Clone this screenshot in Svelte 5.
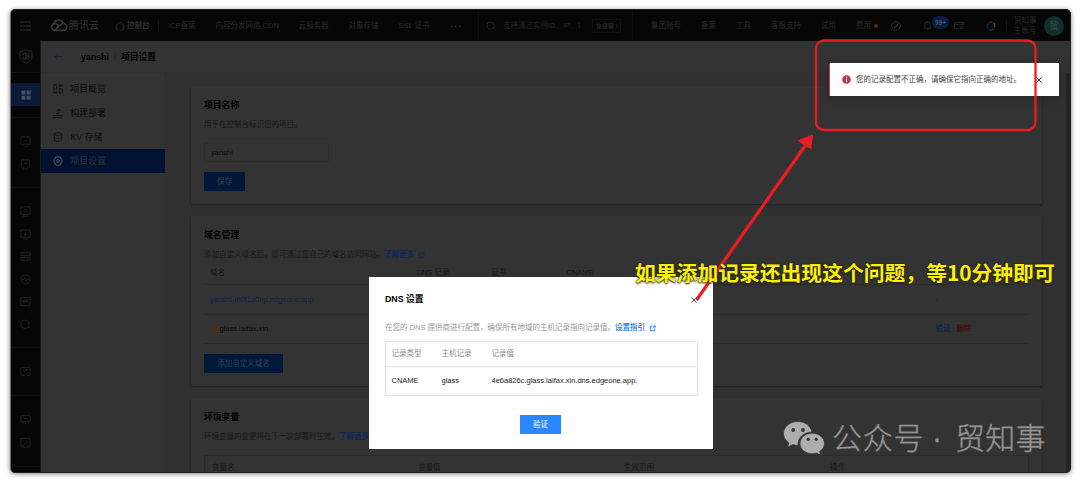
<script>
  const left = [
    ['ICP备案', 47.5], ['内容分发网络 CDN', 83], ['云服务器', 50], ['对象存储', 50], ['SSL 证书', 52]
  ];
  const right = [['集团账号', 50], ['备案', 35], ['工具', 35], ['客服支持', 50], ['试用', 35], ['费用', 18]];
  const groups = [
    { h: 70, icons: ['monitor', 'shield'] },
    { h: 160, icons: ['screen', 'down', 'server', 'pulse', 'doc', 'search'] },
    { h: 48, icons: ['mail'] },
    { h: 71, icons: ['chip', 'image'] },
    { h: 6, icons: [] }
  ];
  const paths = {
    monitor: 'M1 1h10v8H1zM3 11h6M4 6l1.5-1.5 1 1L8 4',
    shield: 'M1.5 1h9v5.5C10.5 9 8 10.5 6 11.2 4 10.5 1.5 9 1.5 6.5zM4 6l1.5-1.5 1 1L8 4',
    screen: 'M1 1h10v8H1zM3 11h6M4 5a2 2 0 0 1 3.5-1M8 5a2 2 0 0 1-3.5 1',
    down: 'M1 1h10v8H1zM3 11h6M6 3v4M4 5.3l2 2 2-2',
    server: 'M1 1.5h10v3.5H1zM1 7h10v3.5H1zM3 3.2h2M7 3.2h2M3 8.8h2M7 8.8h2',
    pulse: 'M11 6A5 5 0 1 1 1 6a5 5 0 0 1 10 0zM2.5 6h1.5l1-2.5 2 5L8 6h1.5',
    doc: 'M1 1.5h10v9H1zM3 4.5h6M3 6h6M3 7.5h3',
    search: 'M10 5.7A4.4 4.4 0 1 1 1.2 5.7a4.4 4.4 0 0 1 8.8 0zM8.5 9.3h2.5',
    mail: 'M6 10H1V1.5h10V6M3 4l2 1.5L9 3M11 8.8a1.8 1.8 0 1 1-3.6 0 1.8 1.8 0 0 1 3.6 0z',
    chip: 'M1 1.5h10v7H1zM4 5h4M3 9v2M6 9v2M9 9v2',
    image: 'M1 1.5h10v9.5H1zM2 10.5l4-4M6.5 3.5l3 3M6 6.5l4.5 4'
  };
</script>

{#snippet ext()}
  <svg class="ext" viewBox="0 0 8 8"><path d="M4 1.5H1.5v5h5V4M4 4.2 7 1.2M5 1h2v2" /></svg>
{/snippet}

<div class="stage">
  <div class="window">
    <header>
      <svg class="burger" viewBox="0 0 11 10"><path d="M0 1h11M0 5h11M0 9h11" /></svg>
      <svg class="cloud" viewBox="0 0 18 13"><path d="M4.6 11.3h8.7a3.4 3.4 0 0 0 0-6.8c-1.4 0-2.4.8-3.4 1.8l-5.1 4.9M4.9 11.3a3.4 3.4 0 1 1 2.4-5.8l1 .9M4.1 4.8a4.8 4.8 0 0 1 9.2-.3" /></svg>
      <span class="brand">腾讯云</span>
      <svg class="house" viewBox="0 0 10 10"><path d="M.5 5 5 1l4.500 4M1.8 4v5.200h1.700M8.200 4v5.200H6.500" /></svg>
      <b class="console">控制台</b>
      <i class="bar"></i>
      <nav class="links">
        {#each left as [t, w]}<span style="width:{w}px">{t}</span>{/each}
      </nav>
      <span class="dots">•••</span>
      <div class="find">
        <svg viewBox="0 0 10 10"><circle cx="4.5" cy="4.5" r="3.6" /><path d="m7.2 7.2 2 2" /></svg>
        <span class="ph">支持通过实例ID、IP、名称</span>
        <kbd>快捷键 /</kbd>
      </div>
      <nav class="links tools">
        {#each right as [t, w]}<span style="width:{w}px">{t}</span>{/each}
      </nav>
      <i class="due"></i>
      <svg class="compass" viewBox="0 0 10 10"><circle cx="5" cy="5" r="4.4" /><path d="M3.5 7.5V5.5L6.500 4v-1.500M3.500 5.500 5 6.500 6.500 4" /></svg>
      <div class="bell">
        <svg viewBox="0 0 10 11"><path d="M.7 8.5h8.6M2 8.5V4.600a3 3 0 0 1 6 0v3.900M4 10.200h2M5 .5v1" /></svg>
        <span class="badge">99+</span>
      </div>
      <svg class="wallet" viewBox="0 0 11 9"><path d="M5.5 8H.7V1h9.600v3M.7 3.200h9.600" /><circle cx="8.400" cy="6.600" r="1.500" /></svg>
      <svg class="hex" viewBox="0 0 10 10"><path stroke="#542316" d="M2.5 2 5 .8 6.500 1.600" /><path stroke="#55421a" d="M7.800 2.200 8.700 3v3.600" /><path stroke="#19315d" d="M7.600 8 5 9.200 2.400 8" /><path stroke="#272052" d="M1.300 7V3.200L3 4" /></svg>
      <i class="bar last"></i>
      <div class="user">贸知事<br />主账号</div>
      <div class="avatar">贸</div>
    </header>

    <div class="body">
      <aside class="rail">
        <div class="product">
          <svg viewBox="0 0 14 15"><path d="M7 .8 13 3v4.700c0 3-2.800 5.200-6 6.600-3.200-1.400-6-3.600-6-6.600V3z" /><path d="M4 4h6v6H4zM4 4l6 3-6 3M7 4v6" /></svg>
        </div>
        <div class="current">
          <svg viewBox="0 0 10 10"><path d="M.5.5h4v4h-4zM5.700.5h4v4h-4zM.5 5.700h4v4h-4zM5.700 5.700h4v4h-4z" /></svg>
        </div>
        {#each groups as g}
          <div class="group" style="height:{g.h}px">
            {#each g.icons as name}<svg viewBox="0 0 12 12"><path d={paths[name]} /></svg>{/each}
          </div>
        {/each}
      </aside>

      <div class="work">
        <div class="crumbs">
          <svg viewBox="0 0 9 7"><path d="M8.500 3.500H1M3.700.8 1 3.500l2.700 2.700" /></svg>
          <b>yanshi</b><em>/</em><b>项目设置</b>
        </div>
        <div class="split">
          <nav class="menu">
            <div><svg viewBox="0 0 10 10"><path d="M.7.7h3v4.600h-3zM6.300 4.700h3v4.600h-3z" /><path class="fat" d="M.2 8.500h4M5.800 1.500h4" /></svg>项目概览</div>
            <div><svg viewBox="0 0 10 10"><path d="M0 9.500h10M0 7.500h10M3 5.500h2.800V1M3.500 3l2.300-2.200L8 3" /></svg>构建部署</div>
            <div><svg viewBox="0 0 10 10"><ellipse cx="5" cy="2" rx="3.700" ry="1.400" /><path d="M1.300 2v6c0 2 7.400 2 7.400 0V2M1.300 5c0 1.900 7.400 1.900 7.400 0" /></svg>KV 存储</div>
            <div class="on"><svg viewBox="0 0 10 10"><path d="M3 .9h4L9.300 5 7 9.100H3L.7 5z" /><circle cx="5" cy="5" r="1.300" /></svg>项目设置</div>
          </nav>
          <main>
            <section class="card c1">
              <h3>项目名称</h3>
              <p>用于在控制台标识您的项目。</p>
              <div class="input">yanshi</div>
              <div class="btn">保存</div>
            </section>
            <section class="card c2">
              <h3>域名管理</h3>
              <p>添加自定义域名后，即可通过您自己的域名访问网站。<b>了解更多</b>{@render ext()}</p>
              <div class="tr th"><span>域名</span><span>DNS 记录</span><span>证书</span><span>CNAME</span><span></span></div>
              <div class="tr r1"><span class="blue">yanshi-m0t1a0np.edgeone.app</span><span></span><span></span><span></span><span>-</span></div>
              <div class="tr r2"><span class="warn"><svg viewBox="0 0 9 9"><circle cx="4.500" cy="4.500" r="3.700" /><path d="M4.500 2.300v2.800M4.500 6v.8" /></svg>glass.laifax.xin</span><span></span><span></span><span></span><span><b class="blue">验证</b><b class="red">删除</b></span></div>
              <div class="btn wide">添加自定义域名</div>
            </section>
            <section class="card c3">
              <h3>环境变量</h3>
              <p>环境变量的变更将在下一次部署时生效。<b>了解更多</b></p>
              <div class="vars"><span>变量名</span><span>变量值</span><span>生效范围</span><span>操作</span></div>
            </section>
          </main>
          <div class="scroll"></div>
        </div>
      </div>
    </div>
  </div>

  <div class="modal">
    <div class="title"><b>DNS 设置</b><svg viewBox="0 0 6 6"><path d="m.5.5 5 5m0-5-5 5" /></svg></div>
    <p>在您的 DNS 提供商进行配置，确保所有地域的主机记录指向记录值。<b>设置指引</b>{@render ext()}</p>
    <div class="table">
      <div class="row head"><span>记录类型</span><span>主机记录</span><span>记录值</span></div>
      <div class="row"><span>CNAME</span><span>glass</span><span>4e6a826c.glass.laifax.xin.dns.edgeone.app.</span></div>
    </div>
    <div class="verify">验证</div>
  </div>

  <div class="toast">
    <svg class="err" viewBox="0 0 9 9"><circle cx="4.500" cy="4.500" r="4.300" /><path d="M4.500 1.800v1.200M4.500 3.800v3.400" /></svg>
    <span>您的记录配置不正确，请确保它指向正确的地址。</span>
    <svg class="x" viewBox="0 0 6 6"><path d="m.5.5 5 5m0-5-5 5" /></svg>
  </div>

  <svg class="marks" viewBox="0 0 1080 482">
    <rect x="816" y="40.500" width="219.500" height="89.500" rx="8" />
    <path d="M696.500 300 805 146" />
    <path class="tip" d="M813 134.500 811.300 149 806 146.500 797.500 140.500z" />
  </svg>
  <div class="note">如果添加记录还出现这个问题，等10分钟即可</div>

  <div class="sign">
    <svg viewBox="0 0 42 34">
      <path class="bub" d="M15 .5C6.800.5.5 5.800.5 12.500c0 3.800 2 7 5.300 9.200L4.700 26.300l5-2.700c1.800.5 3.600.8 5.400.8C14.300 17 20.500 11.200 29 11.200 27.800 5 22 .5 15 .5z" />
      <path class="bub" d="M29.200 12.200c-7 0-12.200 4.600-12.200 10.300s5.200 10.200 12.200 10.200c1.500 0 3-.3 4.300-.7l4 2-.9-3.500c3-1.900 4.800-4.800 4.800-8 0-5.700-5.200-10.300-12.200-10.300z" />
      <g class="eye"><circle cx="10.200" cy="9" r="1.900" /><circle cx="20" cy="9" r="1.900" /><circle cx="25.200" cy="18.300" r="1.600" /><circle cx="33.200" cy="18.300" r="1.600" /></g>
    </svg>
    <span class="gzh">公众号</span><span class="mid">·</span><span class="nm">贸知事</span>
  </div>
</div>

<style>
  :global(body) { background: #fff; }
  * { box-sizing: border-box; }
  .stage {
    position: relative; width: 1080px; height: 482px; overflow: hidden; padding: 9px 9px 9px 10px;
    font: 7.5px/12px "Liberation Sans", "Noto Sans CJK SC", sans-serif; white-space: nowrap;
  }
  svg { fill: none; stroke: currentColor; display: block; flex: none; }
  b, h3 { font-weight: 700; }
  p, h3 { margin: 0; }
  .window {
    height: 464px; border-radius: 5px; overflow: hidden; background: #333; display: flex; flex-direction: column;
    border: 1px solid #1d1d1d; border-left-color: #6e6e6e; box-shadow: 0 1px 5px rgba(0, 0, 0, .5);
  }
  header { height: 31px; flex: none; background: #060606; color: #2b2b2b; display: flex; align-items: center; padding-left: 9px; }
  .burger { width: 11px; height: 10px; stroke: #303030; stroke-width: 1.2; margin-right: 19px; }
  .cloud { width: 18px; height: 13px; stroke: #383838; stroke-width: 1.7; margin-right: 1px; }
  .brand { font-size: 10px; color: #343434; width: 46px; padding-top: 1px; }
  .house { width: 10px; height: 10px; margin-right: 2px; }
  .console { width: 31px; color: #303030; }
  .bar { width: 1px; height: 12px; background: #121212; margin-right: 9px; }
  .links { display: flex; }
  .dots { width: 27.5px; font-size: 6px; letter-spacing: 2px; }
  .find { height: 31px; width: 155px; display: flex; align-items: center; border: solid #0d0d0d; border-width: 0 1px; padding-left: 7px; color: #252525; }
  .find svg { width: 10px; height: 10px; margin-right: 7px; }
  .ph { width: 77px; overflow: hidden; }
  kbd { font: 700 6px/12px "Liberation Sans", "Noto Sans CJK SC", sans-serif; border: 1px solid #101010; margin-left: 12px; padding: 0 3px; }
  .tools { margin-left: 18px; }
  .due { width: 4px; height: 4px; border-radius: 50%; background: #54300e; margin-right: 13px; }
  .compass { width: 10px; height: 10px; margin-right: 22px; }
  .bell { position: relative; width: 31px; }
  .bell svg { width: 9px; height: 11px; }
  .badge { position: absolute; left: 9px; top: -4.5px; width: 17px; height: 13px; border-radius: 7px; background: #0b1d40; color: #45515f; font: 700 6.5px/13px "Liberation Sans", sans-serif; text-align: center; }
  .wallet { width: 10px; height: 9px; margin-right: 22px; }
  .hex { width: 10px; height: 10px; stroke-width: 1.3; margin-right: 10px; }
  .bar.last { margin-right: 7px; }
  .user { line-height: 10px; width: 30px; }
  .avatar { width: 20px; height: 20px; border-radius: 50%; background: #12302a; color: #3e504b; font-size: 9px; line-height: 20px; text-align: center; }

  .body { flex: 1; display: flex; min-height: 0; }
  .rail { width: 30px; background: #060606; color: #252525; display: flex; flex-direction: column; align-items: center; border-right: 1px solid #1b1b1b; flex: none; overflow: hidden; }
  .product { height: 32px; width: 30px; border-bottom: 1px solid #111; margin-bottom: 10px; display: flex; justify-content: center; align-items: center; flex: none; }
  .product svg { width: 14px; height: 15px; }
  .current { width: 30px; height: 23px; background: #0a1a38; display: flex; justify-content: center; align-items: center; margin-bottom: 11px; flex: none; }
  .current svg { width: 10px; height: 10px; fill: #454e5c; stroke: none; }
  .group { width: 30px; border-top: 1px solid #101010; display: flex; flex-direction: column; align-items: center; padding-top: 18px; gap: 11.5px; flex: none; }
  .group svg { width: 11px; height: 11px; }

  .work { flex: 1; min-width: 0; display: flex; flex-direction: column; }
  .crumbs { height: 32px; flex: none; display: flex; align-items: center; padding-left: 13px; border-bottom: 1px solid #303030; font-size: 8.8px; color: #000; }
  .crumbs svg { width: 9px; height: 7px; color: #122747; margin-right: 18px; }
  .crumbs em { width: 12px; text-align: center; font-style: normal; color: #222; }
  .split { flex: 1; display: flex; min-height: 0; }
  .menu { width: 125px; border-right: 1px solid #2f2f2f; padding-top: 4px; font-size: 8.8px; color: #090909; flex: none; }
  .menu div { height: 24px; display: flex; align-items: center; gap: 7.5px; padding-left: 12px; }
  .menu svg { width: 10px; height: 10px; color: #151515; }
  .fat { stroke-width: 2; }
  .menu .on { background: #001131; color: #333; }
  .menu .on svg { color: #404855; stroke-width: 1.3; }
  main { flex: 1; background: #313131; padding: 13px 24px 0 25px; overflow: hidden; }
  .scroll { width: 4px; background: #252525; }
  .card { background: #333; box-shadow: 0 1px 2px rgba(0, 0, 0, .4); padding: 12px 13px 0; margin-bottom: 12px; color: #191919; }
  .c1 { height: 118px; }
  .c2 { height: 170px; }
  .c3 { height: 120px; }
  h3 { font-size: 8.8px; line-height: 14px; color: #000; }
  .card p { margin-top: 7px; line-height: 12px; display: flex; align-items: center; }
  .card p b { color: #0a2a58; }
  .ext { width: 7px; height: 7px; color: #0a2a58; margin-left: 4px; }
  .input { width: 125px; height: 19px; border: 1px solid #2d2d2d; margin-top: 12px; line-height: 18px; padding-left: 6px; color: #080808; }
  .btn { width: 41px; height: 19px; margin-top: 10px; background: #001839; color: #334055; text-align: center; line-height: 19px; }
  .btn.wide { width: 79px; }
  .tr { display: grid; grid-template-columns: 206.5px 75px 75px 369px 1fr; padding-left: 6px; border-bottom: 1px solid #2c2c2c; align-items: center; }
  .th { height: 24px; color: #151515; }
  .r1 { height: 30px; }
  .r2 { height: 29px; }
  .c2 .btn { margin-top: 10px; }
  .blue { color: #0a2349; }
  .red { color: #3b1215; margin-left: 6px; }
  .warn { display: flex; align-items: center; color: #080808; gap: .5px; }
  .warn svg { width: 9px; height: 9px; color: #57300d; }
  .vars { display: grid; grid-template-columns: 206px 206px 206px 1fr; height: 40px; border: 1px solid #2b2b2b; margin-top: 12px; padding: 6px 7px; }

  .modal { position: absolute; left: 369px; top: 277px; width: 344px; height: 172px; background: #fff; padding: 16px 15px 0 16px; color: #222; }
  .title { display: flex; justify-content: space-between; font-size: 8.8px; color: #000; height: 29px; }
  .title svg { width: 6px; height: 6px; margin-top: 4px; color: #333; stroke-width: .9; margin-right: 1px; }
  .modal p { display: flex; align-items: center; color: #999; height: 12px; }
  .modal p b { color: #0c6cff; font-weight: 500; }
  .modal .ext { color: #1473ff; margin-left: 4px; }
  .table { border: 1px solid #dfe1e5; margin-top: 7px; height: 55px; width: 313px; }
  .row { display: grid; grid-template-columns: 50px 50px 1fr; padding-left: 5.5px; line-height: 28px; }
  .head { height: 25px; line-height: 24px; border-bottom: 1px solid #dfe1e5; color: #888; }
  .verify { width: 41px; height: 19px; margin: 18.5px 0 0 135px; background: #2b87ff; color: #fff; line-height: 20px; text-align: center; }

  .toast { position: absolute; left: 829px; top: 63px; width: 230px; height: 33px; background: #fff; border-left: 1.5px solid #c8354d; display: flex; align-items: center; padding-left: 12px; color: #444; box-shadow: 0 2px 10px rgba(0, 0, 0, .25); }
  .err { width: 9px; height: 9px; fill: #bd354a; stroke: none; margin-right: 5px; }
  .err path { stroke: #fff; }
  .toast span { width: 180px; }
  .x { width: 6px; height: 6px; color: #333; }
  .marks { position: absolute; inset: 0; width: 1080px; height: 482px; stroke: #ed1c24; stroke-width: 2.3; }
  .marks path { stroke-width: 3.2; }
  .marks .tip { fill: #ed1c24; stroke-width: 0; }
  .note { position: absolute; left: 635px; top: 257px; font: 700 20.8px/30px "Noto Sans CJK SC", sans-serif; color: #fff200; text-shadow: 0 0 2px #222, 0 1px 2px #222; }
  .sign { position: absolute; left: 783px; top: 421px; display: flex; color: #949494; font: 300 30px/34px "Noto Sans CJK SC", sans-serif; }
  .sign span { margin-top: -2px; -webkit-text-stroke: .35px #949494; }
  .sign svg { width: 42px; height: 34px; margin-right: 7px; }
  .bub { fill: #adadad; stroke: #333; stroke-width: .7; }
  .eye { fill: #333; stroke: none; }
  .gzh { letter-spacing: .7px; width: 91px; }
  .sign .mid { width: 32px; text-align: center; margin-left: -2px; font-family: "Liberation Sans", sans-serif; padding-top: 2px; }
  .nm { margin-left: 2px; letter-spacing: .2px; }
</style>
